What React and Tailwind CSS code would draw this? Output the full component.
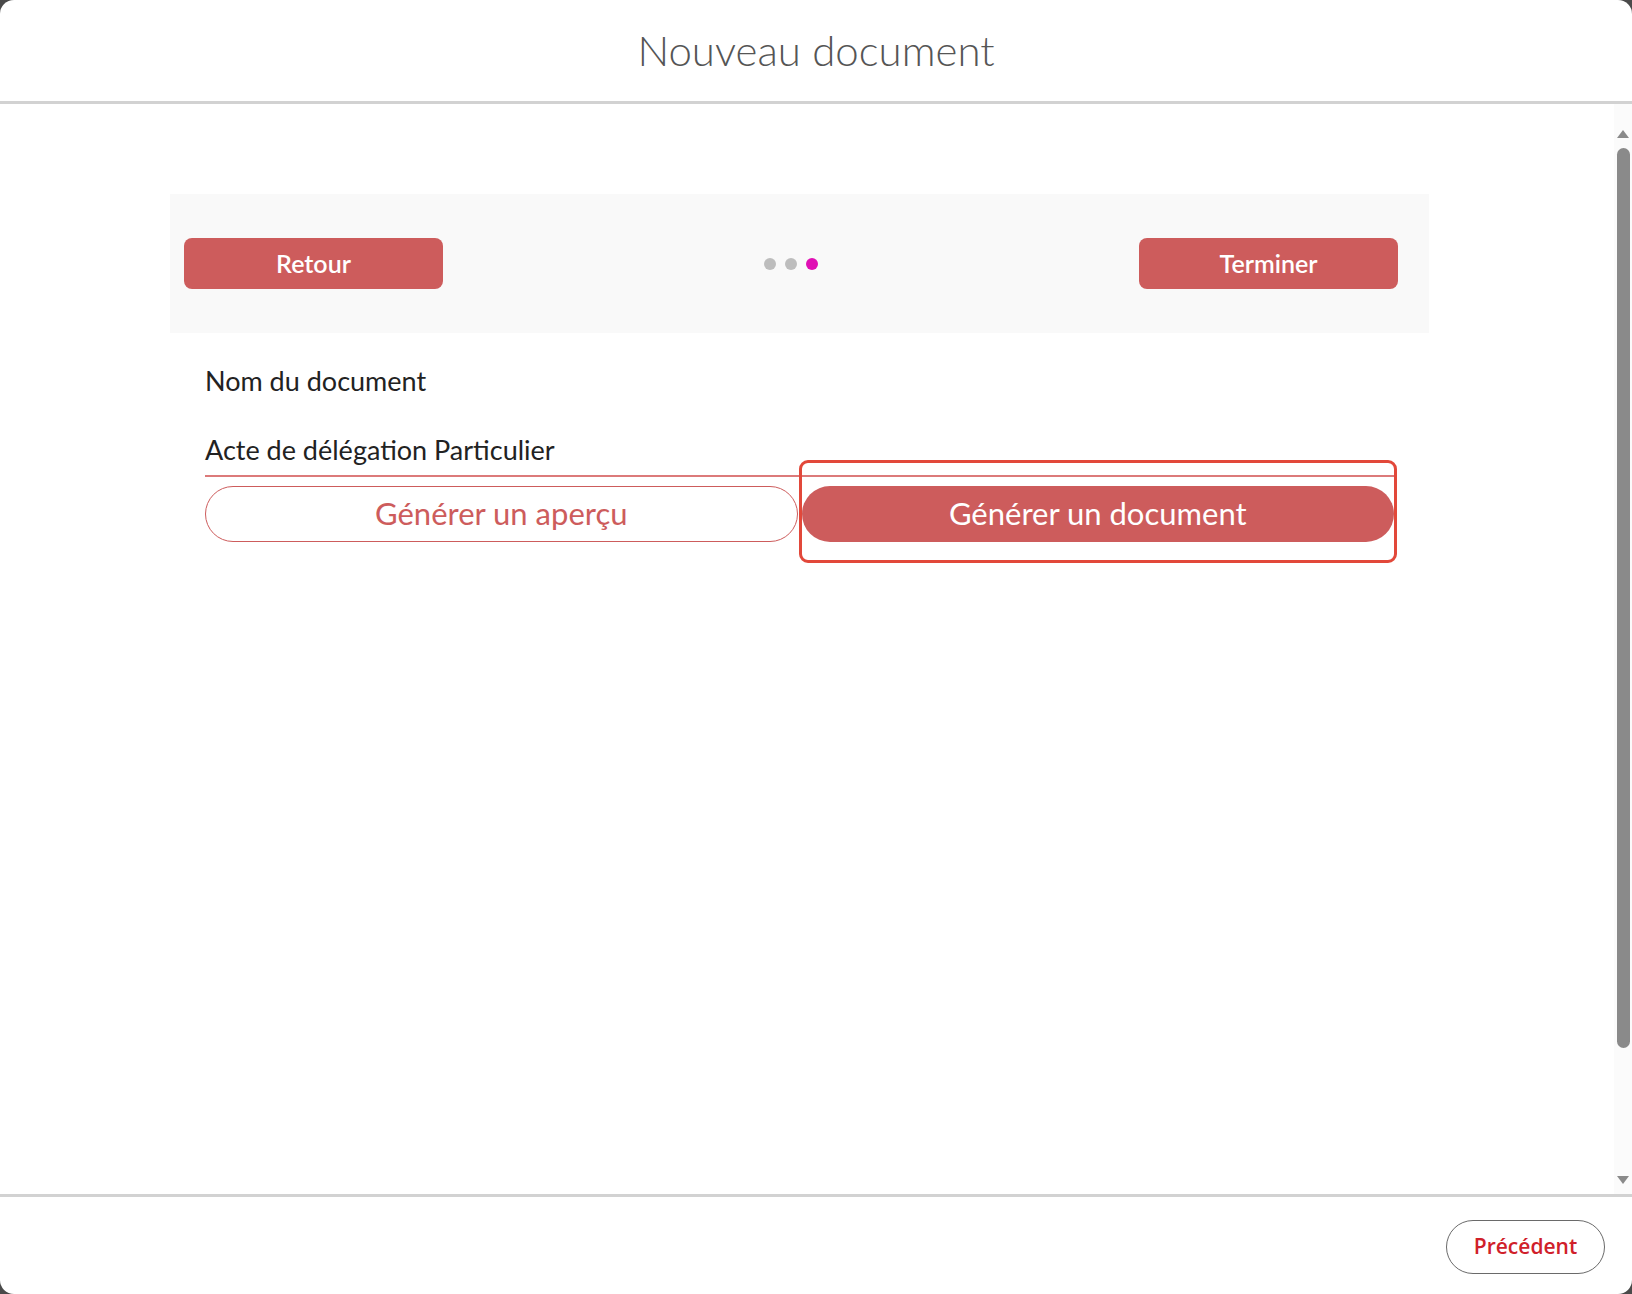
import React from "react";

function Scrollbar() {
  return (
    <div className="flex w-[18px] shrink-0 flex-col items-center bg-[#fbfbfb] pt-[26px] pb-[10px]">
      <svg width="12" height="8" viewBox="0 0 12 8" className="mb-[10px]">
        <path d="M6 0 L12 8 L0 8 Z" fill="#8a8a8a" />
      </svg>
      <div className="h-[900px] w-[13px] rounded-full bg-[#8a8a8a]" />
      <div className="flex-1" />
      <svg width="12" height="8" viewBox="0 0 12 8">
        <path d="M0 0 L12 0 L6 8 Z" fill="#8a8a8a" />
      </svg>
    </div>
  );
}

export default function App() {
  return (
    <div className="h-[1294px] w-[1632px] bg-[#4a4a4a]">
      <div
        className="flex h-full w-full flex-col overflow-hidden rounded-[14px] bg-white"
        style={{ fontFamily: "Lato, 'Noto Sans', sans-serif" }}
      >
        {/* Header */}
        <div className="flex h-[104px] shrink-0 items-center justify-center border-b-[3px] border-[#d2d2d2]">
          <h1 className="text-[42px] font-light text-[#555555]">Nouveau document</h1>
        </div>

        {/* Body */}
        <div className="flex min-h-0 flex-1">
          <div className="flex-1 pt-[90px] pl-[170px] pr-[185px]">
            {/* Step navigation */}
            <div className="flex h-[139px] items-center justify-between bg-[#f9f9f9] pl-[14px] pr-[31px]">
              <button className="h-[51px] w-[259px] rounded-[8px] bg-[#cd5c5c] text-[25px] font-semibold text-white">
                Retour
              </button>
              <div className="flex items-center gap-[9px]">
                <span className="h-[12px] w-[12px] rounded-full bg-[#bdbdbd]" />
                <span className="h-[12px] w-[12px] rounded-full bg-[#bdbdbd]" />
                <span className="h-[12px] w-[12px] rounded-full bg-[#e010b4]" />
              </div>
              <button className="h-[51px] w-[259px] rounded-[8px] bg-[#cd5c5c] text-[25px] font-semibold text-white">
                Terminer
              </button>
            </div>

            {/* Document form */}
            <div className="px-[35px] pt-[32px]">
              <p className="text-[27px] leading-[32px] text-[#222222]">Nom du document</p>
              <p className="mt-[37px] text-[27px] leading-[32px] text-[#222222]">
                Acte de délégation Particulier
              </p>
              <div className="mt-[9px] h-[1.5px] bg-[#dc7a7a]" />
              <div className="relative mt-[9px] grid grid-cols-2 gap-[4px]">
                <button className="h-[56px] rounded-full border-[1.5px] border-[#cd5c5c] bg-white text-[31px] text-[#cd5c5c]">
                  Générer un aperçu
                </button>
                <button className="h-[56px] rounded-full bg-[#cd5c5c] text-[31px] text-white">
                  Générer un document
                </button>
                <div className="pointer-events-none absolute left-[594px] top-[-26px] h-[103px] w-[598px] rounded-[9px] border-[3px] border-[#e2483a]" />
              </div>
            </div>
          </div>
          <Scrollbar />
        </div>

        {/* Footer */}
        <div className="flex h-[100px] shrink-0 items-start justify-end border-t-[3px] border-[#d2d2d2] pt-[23px] pr-[27px]">
          <button
            className="h-[54px] w-[159px] rounded-full border-[1.5px] border-[#6a6a6a] bg-white text-[21px] font-semibold text-[#d0202a]"
            style={{ fontFamily: "'Open Sans', 'Noto Sans', sans-serif" }}
          >
            Précédent
          </button>
        </div>
      </div>
    </div>
  );
}
